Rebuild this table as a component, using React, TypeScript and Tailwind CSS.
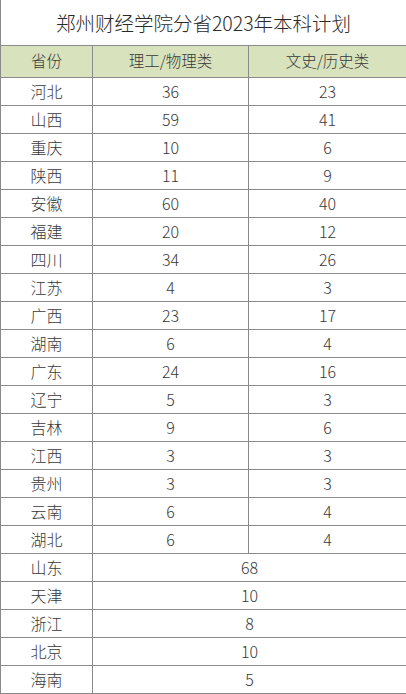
import React from "react";

const split: [string, string, string][] = [
  ["河北", "36", "23"],
  ["山西", "59", "41"],
  ["重庆", "10", "6"],
  ["陕西", "11", "9"],
  ["安徽", "60", "40"],
  ["福建", "20", "12"],
  ["四川", "34", "26"],
  ["江苏", "4", "3"],
  ["广西", "23", "17"],
  ["湖南", "6", "4"],
  ["广东", "24", "16"],
  ["辽宁", "5", "3"],
  ["吉林", "9", "6"],
  ["江西", "3", "3"],
  ["贵州", "3", "3"],
  ["云南", "6", "4"],
  ["湖北", "6", "4"],
];

const merged: [string, string][] = [
  ["山东", "68"],
  ["天津", "10"],
  ["浙江", "8"],
  ["北京", "10"],
  ["海南", "5"],
];

const cell = "border border-[#8a8a8a] text-center align-middle p-0";

export default function App() {
  return (
    <div
      className="w-[406px] h-[694px] bg-white text-[#383838] font-light overflow-hidden"
      style={{ fontFamily: '"Noto Sans CJK SC", "Noto Sans", sans-serif' }}
    >
      <table className="w-[406px] table-fixed border-collapse">
        <colgroup>
          <col className="w-[92px]" />
          <col className="w-[156px]" />
          <col className="w-[158px]" />
        </colgroup>
        <tbody>
          <tr className="h-[45px]">
            <td
              colSpan={3}
              className="border-x border-b border-[#8a8a8a] text-center align-middle p-0 text-[19.5px] text-[#2a2a2a]"
            >
              郑州财经学院分省2023年本科计划
            </td>
          </tr>
          <tr className="h-[32px] bg-[#d8e3bd] text-[15.5px]">
            <td className={cell}>省份</td>
            <td className={cell}>理工/物理类</td>
            <td className={cell}>文史/历史类</td>
          </tr>
          {split.map(([p, a, b]) => (
            <tr key={p} className="h-[28px] text-[16px]">
              <td className={cell}>{p}</td>
              <td className={cell}>{a}</td>
              <td className={cell}>{b}</td>
            </tr>
          ))}
          {merged.map(([p, n]) => (
            <tr key={p} className="h-[28px] text-[16px]">
              <td className={cell}>{p}</td>
              <td className={cell} colSpan={2}>
                {n}
              </td>
            </tr>
          ))}
        </tbody>
      </table>
    </div>
  );
}
